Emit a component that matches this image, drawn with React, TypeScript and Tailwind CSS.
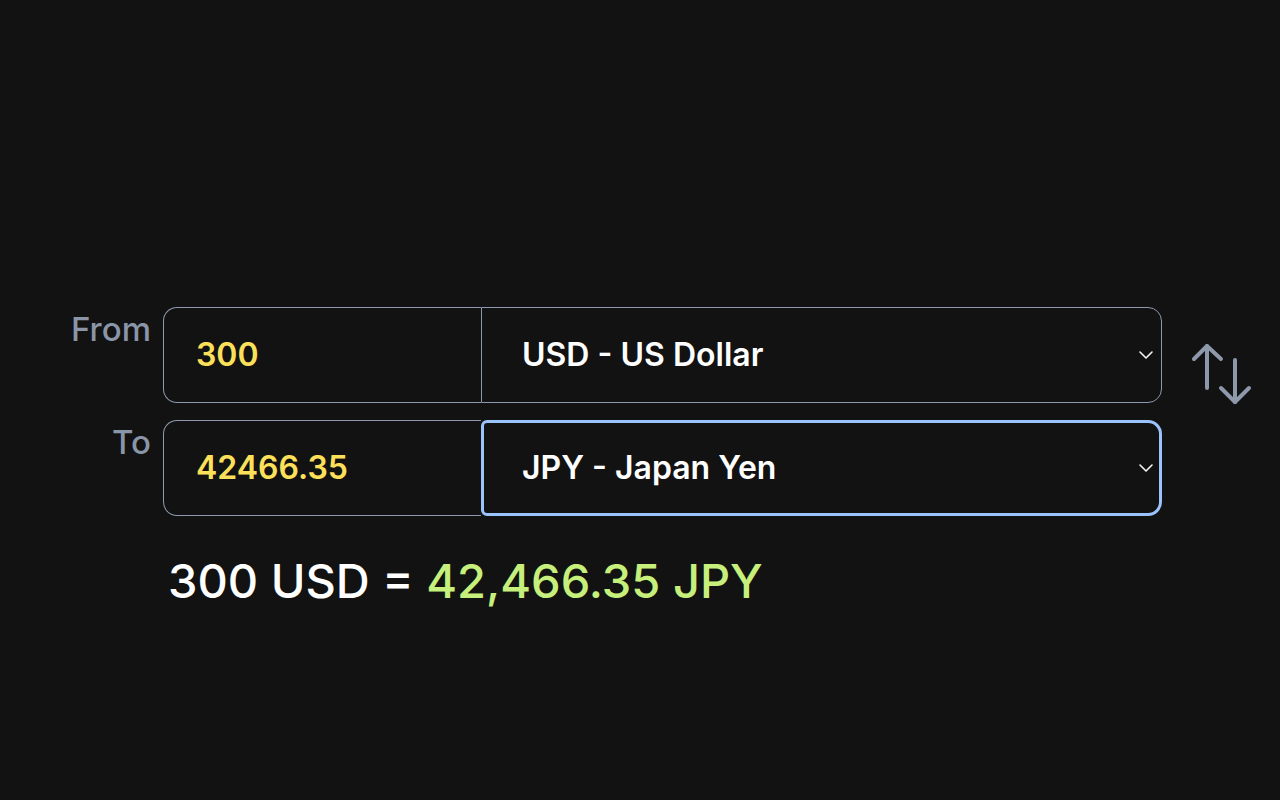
import { useState } from 'react';

const currencies = [
  { code: 'USD', name: 'US Dollar' },
  { code: 'JPY', name: 'Japan Yen' },
  { code: 'EUR', name: 'Euro' },
  { code: 'GBP', name: 'British Pound' },
];

function Chevron() {
  return (
    <svg
      className="pointer-events-none absolute right-[8px] top-1/2 -translate-y-1/2"
      width="16"
      height="10"
      viewBox="0 0 16 10"
      fill="none"
    >
      <path d="M2 2l6 6 6-6" stroke="#f5f5f5" strokeWidth="1.6" strokeLinecap="round" strokeLinejoin="round" />
    </svg>
  );
}

function SwapIcon() {
  return (
    <svg width="62" height="62" viewBox="0 0 62 62" fill="none">
      <g stroke="#8d98ab" strokeWidth="4" strokeLinecap="round" strokeLinejoin="round">
        <path d="M17 3v42" />
        <path d="M4 16L17 3l14 13" />
        <path d="M45 17v42" />
        <path d="M31 45l14 14 14-14" />
      </g>
    </svg>
  );
}

export default function App() {
  const [amount, setAmount] = useState('300');
  const [from, setFrom] = useState('USD');
  const [to, setTo] = useState('JPY');
  const rate = 141.5545;
  const converted = (parseFloat(amount || '0') * rate).toFixed(2);
  const pretty = Number(converted).toLocaleString('en-US', { minimumFractionDigits: 2 });

  return (
    <div className="min-h-screen w-full bg-[#121212] pt-[307px] font-['Inter','Noto_Sans',sans-serif]">
      <div className="flex flex-col gap-[17px] pl-[70px]">
        <div className="flex h-[96px] items-start">
          <label className="w-[81px] pt-[2px] text-right text-[33px] font-medium leading-[40px] text-[#8b95a8]">From</label>
          <div className="ml-[12px] flex h-[96px] w-[999px]">
            <input
              value={amount}
              onChange={(e) => setAmount(e.target.value)}
              className="w-[318px] rounded-l-[14px] border border-r-0 border-[#8d99ae] bg-[#121212] pl-[32px] text-[32px] font-semibold text-[#fde05a] outline-none"
            />
            <div className="relative flex-1">
              <select
                value={from}
                onChange={(e) => setFrom(e.target.value)}
                className="h-full w-full appearance-none rounded-r-[14px] border border-[#8d99ae] bg-[#121212] pl-[40px] text-[32px] font-semibold text-white outline-none"
              >
                {currencies.map((c) => (
                  <option key={c.code} value={c.code}>{c.code} - {c.name}</option>
                ))}
              </select>
              <Chevron />
            </div>
          </div>
          <div className="ml-[28px] mt-[36px]">
            <SwapIcon />
          </div>
        </div>

        <div className="flex h-[96px] items-start">
          <label className="w-[81px] pt-[2px] text-right text-[33px] font-medium leading-[40px] text-[#8b95a8]">To</label>
          <div className="ml-[12px] flex h-[96px] w-[999px]">
            <input
              value={converted}
              readOnly
              className="w-[318px] rounded-l-[14px] border border-r-0 border-[#8d99ae] bg-[#121212] pl-[32px] text-[32px] font-semibold text-[#fde05a] outline-none"
            />
            <div className="relative flex-1">
              <select
                value={to}
                onChange={(e) => setTo(e.target.value)}
                className="h-full w-full appearance-none rounded-[6px] rounded-r-[14px] border-[3px] border-[#9ac3fb] bg-[#121212] pl-[38px] text-[32px] font-semibold text-white outline-none"
              >
                {currencies.map((c) => (
                  <option key={c.code} value={c.code}>{c.code} - {c.name}</option>
                ))}
              </select>
              <Chevron />
            </div>
          </div>
        </div>

        <p className="ml-[98px] mt-[20px] text-[47px] font-medium leading-[56px] text-white">
          {amount} {from} = <span className="text-[#c6ef7c]">{pretty} {to}</span>
        </p>
      </div>
    </div>
  );
}
